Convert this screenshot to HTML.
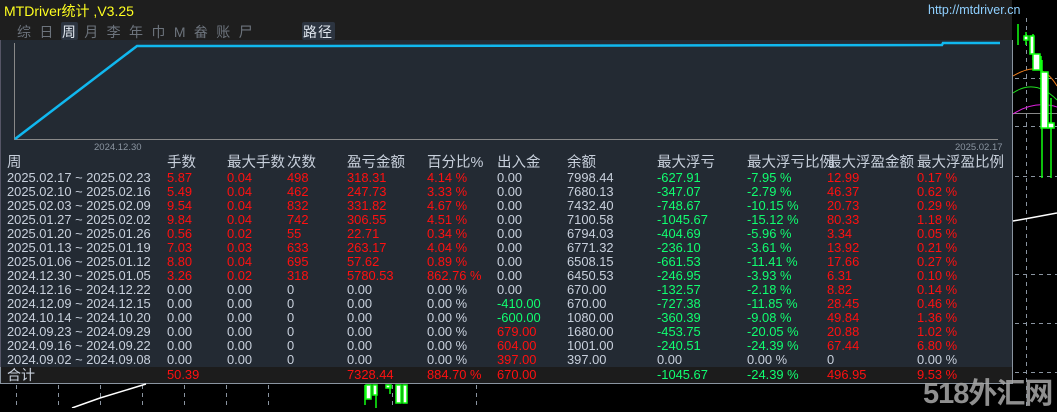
<!DOCTYPE html>
<html><head><meta charset="utf-8"><style>
body{margin:0;width:1057px;height:408px;background:#000;overflow:hidden;position:relative;font-family:"Liberation Sans","Noto Sans CJK SC",sans-serif;}
.a{position:absolute;white-space:nowrap;}
#top{left:0;top:0;width:1012px;height:40px;background:#1e1e1e;}
#panel{left:0;top:40px;width:1011px;height:327px;background:#232a33;border-left:1px solid #556;border-right:1px solid #8a94a0;}
#tot{left:0;top:367px;width:1011px;height:16px;background:#1c1c1c;border:1px solid #8a94a0;border-top:none;}
.r{position:absolute;left:0;height:14px;font-size:12.9px;line-height:14px;color:#c8d0dc;}
.r span{position:absolute;white-space:nowrap;}
.R{color:#ff1010!important}.G{color:#10ff70!important}
.h{font-size:14px;color:#c8d0dc;}
</style></head><body>
<div id="top" class="a"></div>
<div class="a" style="left:4px;top:1px;color:#ffff20;font-size:14px">MTDriver统计 ,V3.25</div>
<div class="a" style="left:928px;top:3px;color:#8fd0ff;font-size:12.5px">http://mtdriver.cn</div>
<div class="a" style="left:61px;top:22px;width:17px;height:18px;background:#2c3440;border-radius:2px"></div>
<div class="a" style="left:302px;top:22px;width:33px;height:18px;background:#2c3440;border-radius:2px"></div>
<div class="a" style="left:17px;top:22px;font-size:14px;color:#6c737c;letter-spacing:8.4px">综日<span style="color:#e0e6ee">周</span>月李年巾M畚账尸</div>
<div class="a" style="left:303px;top:22px;font-size:14px;color:#e0e6ee;letter-spacing:1px">路径</div>
<div id="panel" class="a"></div>
<div id="tot" class="a"></div>
<svg class="a" style="left:0;top:0" width="1057" height="408">
<line x1="14.5" y1="43" x2="14.5" y2="140" stroke="#888" stroke-width="1"/>
<line x1="14" y1="139.5" x2="998" y2="139.5" stroke="#888" stroke-width="1"/>
<polyline points="15,139 137,46 322,46 942,45 943,43 1000,43" fill="none" stroke="#10b8f0" stroke-width="2.5"/>
<g stroke="#8a94a0" stroke-dasharray="4,4" stroke-width="1">
<line x1="1026.5" y1="18" x2="1026.5" y2="408"/>
<line x1="1015" y1="78.5" x2="1057" y2="78.5"/><line x1="1015" y1="126.5" x2="1057" y2="126.5"/>
<line x1="1015" y1="176.5" x2="1057" y2="176.5"/><line x1="1015" y1="274.5" x2="1057" y2="274.5"/>
<line x1="1015" y1="323.5" x2="1057" y2="323.5"/><line x1="1015" y1="372.5" x2="1057" y2="372.5"/>
<line x1="16.5" y1="385" x2="16.5" y2="408"/><line x1="58.5" y1="385" x2="58.5" y2="408"/><line x1="100.5" y1="385" x2="100.5" y2="408"/><line x1="142.5" y1="385" x2="142.5" y2="408"/><line x1="184.5" y1="385" x2="184.5" y2="408"/><line x1="226.5" y1="385" x2="226.5" y2="408"/><line x1="268.5" y1="385" x2="268.5" y2="408"/><line x1="392.5" y1="385" x2="392.5" y2="408"/><line x1="476.5" y1="385" x2="476.5" y2="408"/>
</g>
<line x1="1013" y1="113.5" x2="1057" y2="113.5" stroke="#888"/>
<polyline points="72,408 100,398 146,384" fill="none" stroke="#fff" stroke-width="1.5"/>
<polyline points="1013,221 1030,218 1057,213" fill="none" stroke="#fff" stroke-width="1.5"/>
<path d="M1013,76 Q1030,66 1040,70 T1057,86" fill="none" stroke="#f08020"/>
<path d="M1013,93 Q1035,78 1057,100" fill="none" stroke="#20e020"/>
<path d="M1013,114 Q1035,100 1057,107" fill="none" stroke="#e020e0"/>
<g stroke="#10ff10" fill="#fff" stroke-width="1.5">
<line x1="1018" y1="24" x2="1018" y2="45"/><line x1="1026" y1="32" x2="1026" y2="45"/><rect x="1024" y="36" width="4" height="4"/>
<line x1="1033" y1="34" x2="1033" y2="60"/><rect x="1030" y="36" width="4" height="18"/>
<line x1="1041" y1="56" x2="1041" y2="104"/><rect x="1033" y="54" width="7" height="16"/>
<line x1="1042" y1="60" x2="1042" y2="178"/><rect x="1041" y="72" width="7" height="56"/>
<line x1="1051" y1="98" x2="1051" y2="178"/><rect x="1048" y="123" width="6" height="5"/>
<line x1="365" y1="385" x2="365" y2="405"/><rect x="366" y="385" width="5" height="14"/>
<line x1="376" y1="385" x2="376" y2="408"/><rect x="373" y="385" width="4" height="10"/>
<rect x="386" y="385" width="5" height="3"/><line x1="390" y1="385" x2="390" y2="394"/>
<rect x="396" y="385" width="5" height="18"/><rect x="403" y="385" width="4" height="18"/>
</g>
</svg>
<div class="a" style="left:94px;top:142px;font-size:9.5px;color:#8a94a0">2024.12.30</div>
<div class="a" style="left:955px;top:142px;font-size:9.5px;color:#8a94a0">2025.02.17</div>
<div class="r h" style="top:155px;font-size:14.5px;height:17px;line-height:17px">
<span style="left:7px">周</span><span style="left:167px">手数</span><span style="left:227px">最大手数</span><span style="left:287px">次数</span><span style="left:347px">盈亏金额</span><span style="left:427px">百分比%</span><span style="left:497px">出入金</span><span style="left:567px">余额</span><span style="left:657px">最大浮亏</span><span style="left:747px">最大浮亏比例</span><span style="left:827px">最大浮盈金额</span><span style="left:917px">最大浮盈比例</span></div>
<div class="r" style="top:171px"><span style="left:7px">2025.02.17 ~ 2025.02.23</span><span class="R" style="left:167px">5.87</span><span class="R" style="left:227px">0.04</span><span class="R" style="left:287px">498</span><span class="R" style="left:347px">318.31</span><span class="R" style="left:427px">4.14 %</span><span style="left:497px">0.00</span><span style="left:567px">7998.44</span><span class="G" style="left:657px">-627.91</span><span class="G" style="left:747px">-7.95 %</span><span class="R" style="left:827px">12.99</span><span class="R" style="left:917px">0.17 %</span></div>
<div class="r" style="top:185px"><span style="left:7px">2025.02.10 ~ 2025.02.16</span><span class="R" style="left:167px">5.49</span><span class="R" style="left:227px">0.04</span><span class="R" style="left:287px">462</span><span class="R" style="left:347px">247.73</span><span class="R" style="left:427px">3.33 %</span><span style="left:497px">0.00</span><span style="left:567px">7680.13</span><span class="G" style="left:657px">-347.07</span><span class="G" style="left:747px">-2.79 %</span><span class="R" style="left:827px">46.37</span><span class="R" style="left:917px">0.62 %</span></div>
<div class="r" style="top:199px"><span style="left:7px">2025.02.03 ~ 2025.02.09</span><span class="R" style="left:167px">9.54</span><span class="R" style="left:227px">0.04</span><span class="R" style="left:287px">832</span><span class="R" style="left:347px">331.82</span><span class="R" style="left:427px">4.67 %</span><span style="left:497px">0.00</span><span style="left:567px">7432.40</span><span class="G" style="left:657px">-748.67</span><span class="G" style="left:747px">-10.15 %</span><span class="R" style="left:827px">20.73</span><span class="R" style="left:917px">0.29 %</span></div>
<div class="r" style="top:213px"><span style="left:7px">2025.01.27 ~ 2025.02.02</span><span class="R" style="left:167px">9.84</span><span class="R" style="left:227px">0.04</span><span class="R" style="left:287px">742</span><span class="R" style="left:347px">306.55</span><span class="R" style="left:427px">4.51 %</span><span style="left:497px">0.00</span><span style="left:567px">7100.58</span><span class="G" style="left:657px">-1045.67</span><span class="G" style="left:747px">-15.12 %</span><span class="R" style="left:827px">80.33</span><span class="R" style="left:917px">1.18 %</span></div>
<div class="r" style="top:227px"><span style="left:7px">2025.01.20 ~ 2025.01.26</span><span class="R" style="left:167px">0.56</span><span class="R" style="left:227px">0.02</span><span class="R" style="left:287px">55</span><span class="R" style="left:347px">22.71</span><span class="R" style="left:427px">0.34 %</span><span style="left:497px">0.00</span><span style="left:567px">6794.03</span><span class="G" style="left:657px">-404.69</span><span class="G" style="left:747px">-5.96 %</span><span class="R" style="left:827px">3.34</span><span class="R" style="left:917px">0.05 %</span></div>
<div class="r" style="top:241px"><span style="left:7px">2025.01.13 ~ 2025.01.19</span><span class="R" style="left:167px">7.03</span><span class="R" style="left:227px">0.03</span><span class="R" style="left:287px">633</span><span class="R" style="left:347px">263.17</span><span class="R" style="left:427px">4.04 %</span><span style="left:497px">0.00</span><span style="left:567px">6771.32</span><span class="G" style="left:657px">-236.10</span><span class="G" style="left:747px">-3.61 %</span><span class="R" style="left:827px">13.92</span><span class="R" style="left:917px">0.21 %</span></div>
<div class="r" style="top:255px"><span style="left:7px">2025.01.06 ~ 2025.01.12</span><span class="R" style="left:167px">8.80</span><span class="R" style="left:227px">0.04</span><span class="R" style="left:287px">695</span><span class="R" style="left:347px">57.62</span><span class="R" style="left:427px">0.89 %</span><span style="left:497px">0.00</span><span style="left:567px">6508.15</span><span class="G" style="left:657px">-661.53</span><span class="G" style="left:747px">-11.41 %</span><span class="R" style="left:827px">17.66</span><span class="R" style="left:917px">0.27 %</span></div>
<div class="r" style="top:269px"><span style="left:7px">2024.12.30 ~ 2025.01.05</span><span class="R" style="left:167px">3.26</span><span class="R" style="left:227px">0.02</span><span class="R" style="left:287px">318</span><span class="R" style="left:347px">5780.53</span><span class="R" style="left:427px">862.76 %</span><span style="left:497px">0.00</span><span style="left:567px">6450.53</span><span class="G" style="left:657px">-246.95</span><span class="G" style="left:747px">-3.93 %</span><span class="R" style="left:827px">6.31</span><span class="R" style="left:917px">0.10 %</span></div>
<div class="r" style="top:283px"><span style="left:7px">2024.12.16 ~ 2024.12.22</span><span style="left:167px">0.00</span><span style="left:227px">0.00</span><span style="left:287px">0</span><span style="left:347px">0.00</span><span style="left:427px">0.00 %</span><span style="left:497px">0.00</span><span style="left:567px">670.00</span><span class="G" style="left:657px">-132.57</span><span class="G" style="left:747px">-2.18 %</span><span class="R" style="left:827px">8.82</span><span class="R" style="left:917px">0.14 %</span></div>
<div class="r" style="top:297px"><span style="left:7px">2024.12.09 ~ 2024.12.15</span><span style="left:167px">0.00</span><span style="left:227px">0.00</span><span style="left:287px">0</span><span style="left:347px">0.00</span><span style="left:427px">0.00 %</span><span class="G" style="left:497px">-410.00</span><span style="left:567px">670.00</span><span class="G" style="left:657px">-727.38</span><span class="G" style="left:747px">-11.85 %</span><span class="R" style="left:827px">28.45</span><span class="R" style="left:917px">0.46 %</span></div>
<div class="r" style="top:311px"><span style="left:7px">2024.10.14 ~ 2024.10.20</span><span style="left:167px">0.00</span><span style="left:227px">0.00</span><span style="left:287px">0</span><span style="left:347px">0.00</span><span style="left:427px">0.00 %</span><span class="G" style="left:497px">-600.00</span><span style="left:567px">1080.00</span><span class="G" style="left:657px">-360.39</span><span class="G" style="left:747px">-9.08 %</span><span class="R" style="left:827px">49.84</span><span class="R" style="left:917px">1.36 %</span></div>
<div class="r" style="top:325px"><span style="left:7px">2024.09.23 ~ 2024.09.29</span><span style="left:167px">0.00</span><span style="left:227px">0.00</span><span style="left:287px">0</span><span style="left:347px">0.00</span><span style="left:427px">0.00 %</span><span class="R" style="left:497px">679.00</span><span style="left:567px">1680.00</span><span class="G" style="left:657px">-453.75</span><span class="G" style="left:747px">-20.05 %</span><span class="R" style="left:827px">20.88</span><span class="R" style="left:917px">1.02 %</span></div>
<div class="r" style="top:339px"><span style="left:7px">2024.09.16 ~ 2024.09.22</span><span style="left:167px">0.00</span><span style="left:227px">0.00</span><span style="left:287px">0</span><span style="left:347px">0.00</span><span style="left:427px">0.00 %</span><span class="R" style="left:497px">604.00</span><span style="left:567px">1001.00</span><span class="G" style="left:657px">-240.51</span><span class="G" style="left:747px">-24.39 %</span><span class="R" style="left:827px">67.44</span><span class="R" style="left:917px">6.80 %</span></div>
<div class="r" style="top:353px"><span style="left:7px">2024.09.02 ~ 2024.09.08</span><span style="left:167px">0.00</span><span style="left:227px">0.00</span><span style="left:287px">0</span><span style="left:347px">0.00</span><span style="left:427px">0.00 %</span><span class="R" style="left:497px">397.00</span><span style="left:567px">397.00</span><span style="left:657px">0.00</span><span style="left:747px">0.00 %</span><span style="left:827px">0</span><span style="left:917px">0.00 %</span></div>
<div class="r" style="top:368px"><span class="h" style="left:7px;font-size:14px">合计</span><span class="R" style="left:167px">50.39</span><span class="R" style="left:347px">7328.44</span><span class="R" style="left:427px">884.70 %</span><span class="R" style="left:497px">670.00</span><span class="G" style="left:657px">-1045.67</span><span class="G" style="left:747px">-24.39 %</span><span class="R" style="left:827px">496.95</span><span class="R" style="left:917px">9.53 %</span></div>
<div class="a" style="left:923px;top:370px;font-size:29px;font-weight:bold;color:#a8a8a8;opacity:.85;letter-spacing:-1px">518外汇网</div>
</body></html>
